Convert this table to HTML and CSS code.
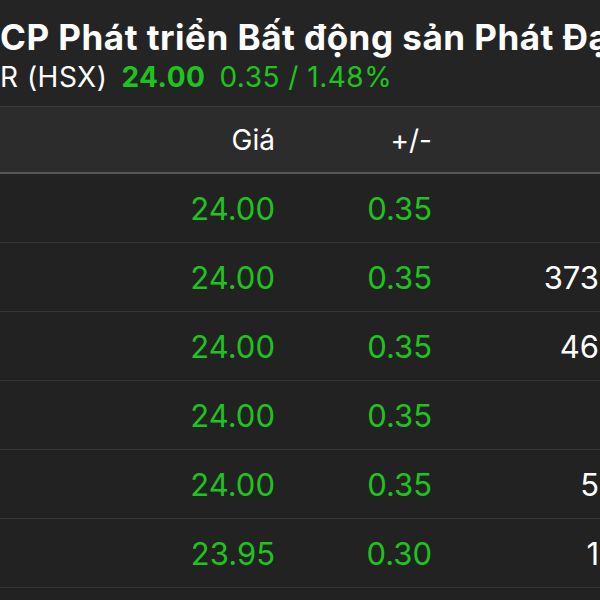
FILE: index.html
```html
<!DOCTYPE html>
<html lang="vi">
<head>
<meta charset="utf-8">
<link rel="stylesheet" href="styles.css">
</head>
<body>
<div class="page">
  <header class="stock">
    <div class="stock-name">CP Phát triển Bất động sản Phát Đạt</div>
    <div class="stock-quote">
      <span class="code">R (HSX)</span>
      <span class="price">24.00</span>
      <span class="change">0.35 / 1.48%</span>
    </div>
  </header>
  <div class="table">
    <div class="row head">
      <div class="cell price-col">Giá</div>
      <div class="cell diff-col">+/-</div>
      <div class="cell vol-col"></div>
    </div>
    <div class="row">
      <div class="cell price-col up">24.00</div>
      <div class="cell diff-col up">0.35</div>
      <div class="cell vol-col"></div>
    </div>
    <div class="row">
      <div class="cell price-col up">24.00</div>
      <div class="cell diff-col up">0.35</div>
      <div class="cell vol-col">373</div>
    </div>
    <div class="row">
      <div class="cell price-col up">24.00</div>
      <div class="cell diff-col up">0.35</div>
      <div class="cell vol-col">46</div>
    </div>
    <div class="row">
      <div class="cell price-col up">24.00</div>
      <div class="cell diff-col up">0.35</div>
      <div class="cell vol-col"></div>
    </div>
    <div class="row">
      <div class="cell price-col up">24.00</div>
      <div class="cell diff-col up">0.35</div>
      <div class="cell vol-col">5</div>
    </div>
    <div class="row">
      <div class="cell price-col up">23.95</div>
      <div class="cell diff-col up">0.30</div>
      <div class="cell vol-col">1</div>
    </div>
  </div>
</div>
</body>
</html>
```

FILE: styles.css
```css
html, body {
  margin: 0;
  padding: 0;
  background: #222222;
}
.page {
  width: 600px;
  height: 600px;
  overflow: hidden;
  font-family: Inter, "Liberation Sans", sans-serif;
  color: #ffffff;
}
.stock {
  background: #242424;
  padding: 18px 0 14px 0;
  border-bottom: 1px solid #3e3e3e;
}
.stock-name {
  font-size: 35px;
  font-weight: 700;
  line-height: 38px;
  letter-spacing: 0.5px;
  white-space: nowrap;
}
.stock-quote {
  margin-top: 6px;
  font-size: 28px;
  line-height: 30px;
  letter-spacing: 0.5px;
  white-space: nowrap;
  display: flex;
  gap: 14px;
}
.stock-quote .price {
  color: #1ec41e;
  font-weight: 700;
}
.stock-quote .change {
  color: #1ec41e;
}
.row {
  display: grid;
  grid-template-columns: 275px 157px 167px;
  height: 68px;
  align-items: center;
  border-bottom: 1px solid #363636;
  font-size: 31px;
}
.row.head {
  background: #2c2c2c;
  height: 65px;
  font-size: 28px;
  border-bottom: 2px solid #555555;
}
.cell {
  text-align: right;
  white-space: nowrap;
}
.up {
  color: #1ec41e;
}
```
